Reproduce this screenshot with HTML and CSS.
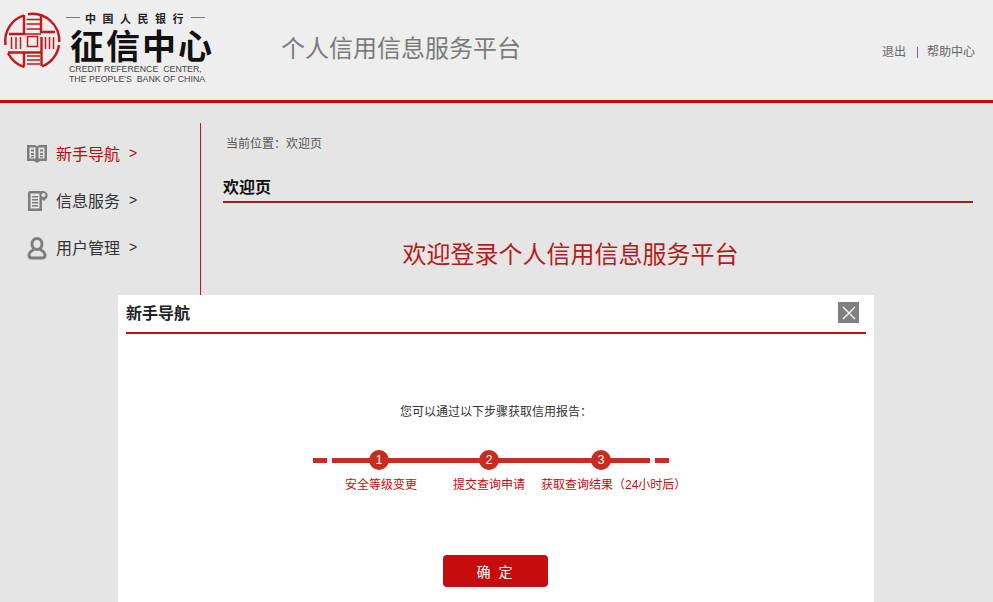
FILE: index.html
```html
<!DOCTYPE html>
<html lang="zh-CN">
<head>
  <meta charset="UTF-8">
  <meta name="viewport" content="width=device-width, initial-scale=1.0">
  <title>个人信用信息服务平台</title>
  <link rel="stylesheet" href="styles.css">
</head>
<body>
  <header class="top">
    <div class="logo">
      <svg class="logo-seal" width="66" height="66" viewBox="0 0 66 66" fill="none" stroke="#c8151b" stroke-width="1.500">
        <g stroke-width="2.400">
          <path d="M24 6.300A27 27 0 0 0 5.500 36"/>
          <path d="M8 44A27 27 0 0 0 24.500 58"/>
          <path d="M28 5.200A27 27 0 0 1 59.300 33"/>
          <path d="M59 36A27 27 0 0 1 42 57.500"/>
          <path d="M24 6V25H9M41 6V23H55M8 43.500H41M41.500 28V57M24 43.500V57"/>
        </g>
        <path d="M26.500 10.500H40M26.500 15H40M26.500 20H40M24 25H41M11.500 28v12M16 28v12M20.500 28v12M45.500 28v12M49.500 28v12M53.500 28v12M27.500 27.500h10v10h-10zM27 47h13M27 51h13M27 55h13"/>
      </svg>
      <div class="logo-text">
        <div class="logo-bank"><i></i><span>中国人民银行</span><i></i></div>
        <div class="logo-name">征信中心</div>
        <div class="logo-en">CREDIT REFERENCE&nbsp; CENTER,<br>THE PEOPLE'S&nbsp; BANK OF CHINA</div>
      </div>
    </div>
    <div class="site-title">个人信用信息服务平台</div>
    <div class="top-links">
      <a>退出</a>
      <span class="sep"></span>
      <a>帮助中心</a>
    </div>
  </header>

  <div class="wrap">
    <nav class="side">
      <a class="side-item active">
        <svg width="22" height="20" viewBox="0 0 22 20"><path fill="#7d7d7d" fill-rule="evenodd" d="M1 1h8l2 1.500L13 1h8v16h-7l-3 2-3-2H1zM3.500 3.500v11h6v-11zM12.500 3.500v11h6v-11zM5 5.500h3v2H5zM5 9h3v2H5zM5 12h3v1.500H5zM14 5.500h3v2h-3zM14 9h3v2h-3zM14 12h3v1.500h-3z"/></svg>
        <span>新手导航</span><b>&gt;</b>
      </a>
      <a class="side-item">
        <svg width="22" height="22" viewBox="0 0 22 22"><path fill="#7d7d7d" fill-rule="evenodd" d="M2 3Q2 1 4 1H17a4.500 4.500 0 0 1 3.500 7.500L18 11l-2-1.500V21H2zM4.500 3.500V18.500H13.500V3.500zM6 6h6v1.500H6zM6 9h6v1.500H6zM6 12h6v1.500H6zM6 15h6v1.500H6zM17.500 3a2 2 0 1 0 .01 0z"/></svg>
        <span>信息服务</span><b>&gt;</b>
      </a>
      <a class="side-item">
        <svg width="22" height="23" viewBox="0 0 22 23" fill="none" stroke="#7d7d7d" stroke-width="3"><ellipse cx="11" cy="7" rx="5" ry="5.500"/><path d="M8 12.500C5 14 3 15.500 3 18q0 3 3 3h10q3 0 3-3c0-2.500-2-4-5-5.500"/></svg>
        <span>用户管理</span><b>&gt;</b>
      </a>
    </nav>
    <main class="content">
      <p class="crumb">当前位置：欢迎页</p>
      <h2 class="page-title">欢迎页</h2>
      <p class="welcome">欢迎登录个人信用信息服务平台</p>
    </main>
  </div>

  <div class="modal">
    <div class="modal-head">
      <h3>新手导航</h3>
      <span class="modal-close">
        <svg width="14" height="14" viewBox="0 0 14 14" stroke="#fff" stroke-width="1.300"><path d="M1 1l12 12M13 1L1 13"/></svg>
      </span>
    </div>
    <p class="modal-intro">您可以通过以下步骤获取信用报告：</p>
    <div class="steps-line">
      <i class="dash"></i>
      <div class="line">
        <span class="dot">1</span>
        <span class="dot">2</span>
        <span class="dot">3</span>
      </div>
      <i class="dash"></i>
    </div>
    <div class="steps-text">
      <span>安全等级变更</span>
      <span>提交查询申请</span>
      <span>获取查询结果（24小时后）</span>
    </div>
    <button class="ok-btn">确 定</button>
  </div>
</body>
</html>
```

FILE: styles.css
```css
html, body {
  height: 100%;
  overflow: hidden;
}

body {
  margin: 0;
  background: #e5e5e5;
  font-family: "Liberation Sans", "Noto Sans CJK SC", sans-serif;
  color: #333;
  position: relative;
}

.top {
  height: 100px;
  background: #eeeeee;
  border-bottom: 3px solid #c40e0e;
  display: flex;
  align-items: flex-start;
}

.logo {
  display: flex;
  width: 281px;
  padding: 9px 0 0 0;
  box-sizing: border-box;
}

.logo-seal {
  flex: none;
}

.logo-text {
  margin-top: 3px;
  width: 150px;
}

.logo-bank {
  display: flex;
  align-items: center;
  font-size: 11px;
  font-weight: bold;
  letter-spacing: 6.500px;
  color: #222;
  height: 11px;
  white-space: nowrap;
}

.logo-bank i {
  width: 14px;
  height: 1px;
  background: #777;
}

.logo-bank span {
  margin: 0 1px 0 5px;
}

.logo-name {
  font-size: 34px;
  line-height: 36px;
  font-weight: bold;
  color: #111;
  letter-spacing: 2px;
  margin-top: 6px;
  white-space: nowrap;
  transform: translateX(4px);
}

.logo-en {
  font-size: 8.800px;
  line-height: 9.500px;
  color: #444;
  white-space: nowrap;
  margin-top: 0;
  transform: translateX(3px);
}

.site-title {
  font-size: 24px;
  line-height: 32px;
  color: #7b7b7b;
  margin-top: 33px;
}

.top-links {
  margin-left: auto;
  padding: 44px 18px 0 0;
  font-size: 12px;
  line-height: 16px;
  color: #666;
  display: flex;
  align-items: center;
}

.sep {
  width: 1px;
  height: 11px;
  background: #8a5a9a;
  margin: 0 9px 0 11px;
}

.wrap {
  display: flex;
  padding-top: 20px;
}

.side {
  width: 201px;
  height: 300px;
  box-sizing: border-box;
  border-right: 1px solid #c8141a;
  padding: 6px 0 0 26px;
  flex: none;
}

.side-item {
  display: flex;
  align-items: center;
  height: 47px;
  font-size: 16px;
  color: #333;
}

.side-item svg {
  width: 22px;
  margin: 3px 8px 0 0;
}

.side-item b {
  font-weight: normal;
  font-size: 14px;
  margin-left: 9px;
}

.side-item.active {
  color: #b80c0c;
}

.content {
  flex: 1;
  padding: 0 20px 0 22px;
}

.crumb {
  margin: 13px 0 0 3px;
  font-size: 12px;
  line-height: 16px;
  color: #555;
}

.page-title {
  margin: 24px 0 0;
  font-size: 16px;
  line-height: 24px;
  font-weight: bold;
  color: #111;
  border-bottom: 2px solid #a81c1c;
  padding-bottom: 1px;
}

.welcome {
  margin: 36px 0 0;
  padding-right: 55px;
  text-align: center;
  font-size: 24px;
  line-height: 32px;
  color: #b51c1c;
}

.modal {
  position: absolute;
  left: 118px;
  top: 295px;
  width: 756px;
  height: 307px;
  overflow: hidden;
  box-sizing: border-box;
  background: #fff;
  padding: 0 8px;
  text-align: center;
}

.modal-head {
  height: 33px;
  padding-bottom: 4px;
  border-bottom: 2px solid #c40e0e;
  display: flex;
  align-items: center;
  justify-content: space-between;
}

.modal-head h3 {
  margin: 0;
  font-size: 16px;
  font-weight: bold;
  color: #222;
}

.modal-close {
  width: 21px;
  height: 21px;
  background: #808080;
  display: flex;
  align-items: center;
  justify-content: center;
  margin-top: 2px;
  margin-right: 7px;
}

.modal-intro {
  margin: 70px 0 0;
  font-size: 12px;
  line-height: 16px;
  color: #333;
}

.steps-line {
  display: flex;
  justify-content: center;
  align-items: center;
  gap: 5px;
  margin-top: 30px;
  padding-right: 10px;
  height: 20px;
}

.dash {
  width: 14px;
  height: 5px;
  background: #c62d20;
}

.line {
  width: 318px;
  height: 5px;
  background: #c62d20;
  display: flex;
  align-items: center;
  padding-left: 37px;
  box-sizing: border-box;
}

.dot {
  width: 20px;
  height: 20px;
  border-radius: 50%;
  background: #c62d20;
  color: #fff;
  font-size: 12px;
  line-height: 20px;
  text-align: center;
  flex: none;
  margin-right: 90px;
}

.dot:nth-child(2) {
  margin-right: 92px;
}

.steps-text {
  display: flex;
  padding-left: 219px;
  margin-top: 7px;
  font-size: 12px;
  line-height: 16px;
  color: #c40e0e;
  text-align: left;
  white-space: nowrap;
}

.steps-text span:nth-child(1) {
  width: 108px;
}

.steps-text span:nth-child(2) {
  width: 88px;
}

.ok-btn {
  display: block;
  width: 105px;
  height: 32px;
  margin: 62px 0 0 317px;
  border: none;
  border-radius: 4px;
  background: #c60c0c;
  color: #fff;
  font-family: inherit;
  font-size: 14px;
  letter-spacing: 2px;
}
```
